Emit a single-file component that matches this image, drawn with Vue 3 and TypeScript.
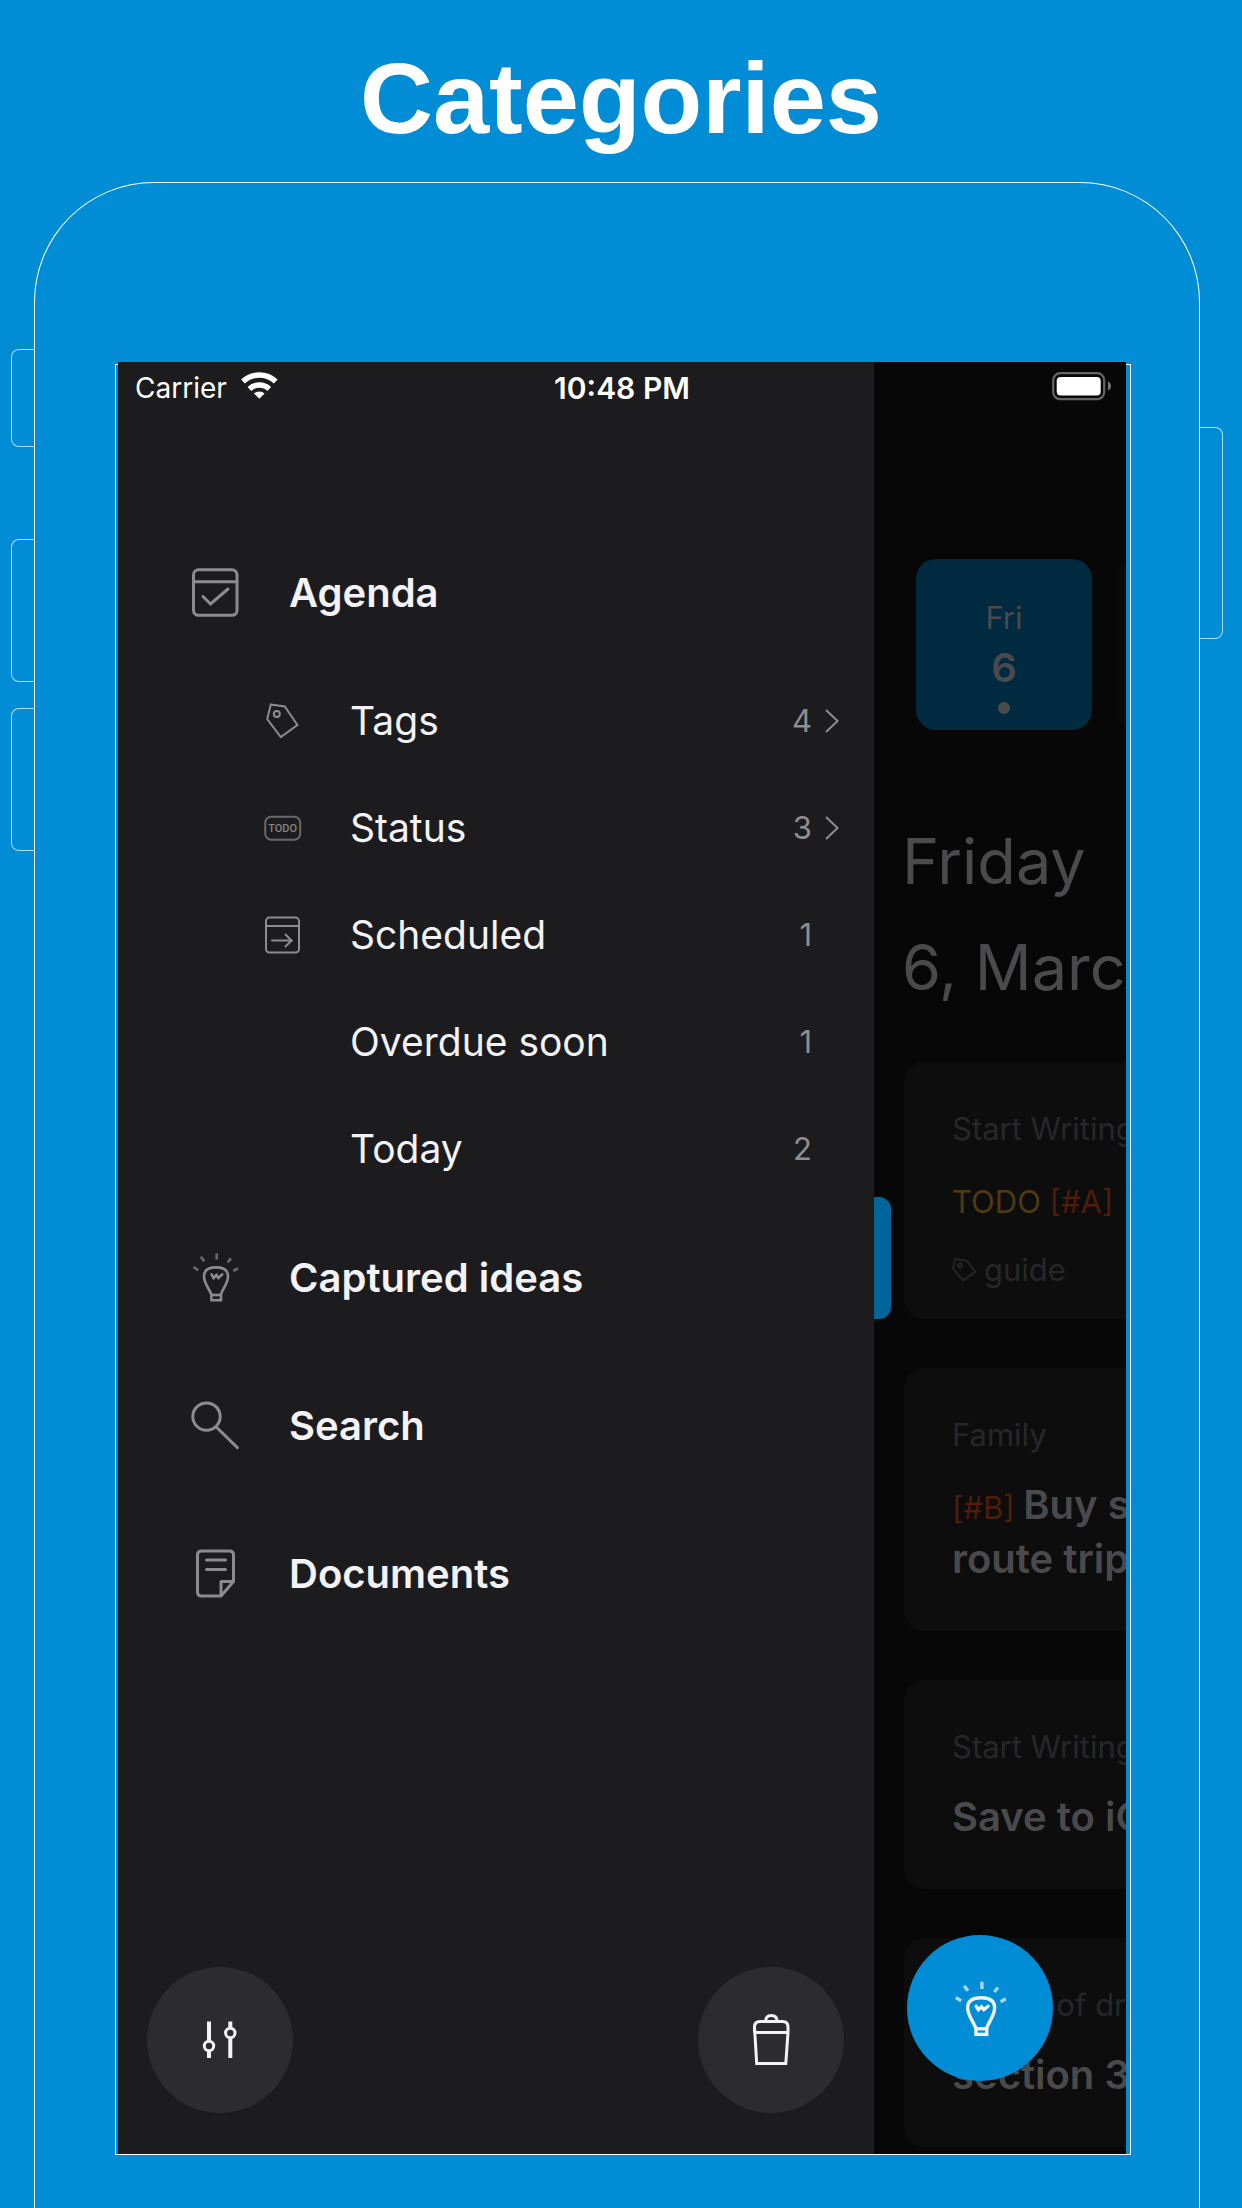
<script setup lang="ts">
interface SubItem {
  label: string
  icon: 'tag' | 'todo' | 'scheduled' | null
  count: number
  expandable: boolean
}

interface MainItem {
  label: string
  icon: 'bulb' | 'search' | 'document'
}

interface Card {
  source: string
  keyword?: string
  priority?: string
  lines: string[]
  tag?: string
}

const agendaItems: SubItem[] = [
  { label: 'Tags', icon: 'tag', count: 4, expandable: true },
  { label: 'Status', icon: 'todo', count: 3, expandable: true },
  { label: 'Scheduled', icon: 'scheduled', count: 1, expandable: false },
  { label: 'Overdue soon', icon: null, count: 1, expandable: false },
  { label: 'Today', icon: null, count: 2, expandable: false },
]

const mainItems: MainItem[] = [
  { label: 'Captured ideas', icon: 'bulb' },
  { label: 'Search', icon: 'search' },
  { label: 'Documents', icon: 'document' },
]

const cards: Card[] = [
  { source: 'Start Writing', keyword: 'TODO', priority: '[#A]', lines: [''], tag: 'guide' },
  { source: 'Family', priority: '[#B]', lines: ['Buy some', 'route trip'] },
  { source: 'Start Writing', lines: ['Save to iCloud'] },
  { source: 'Basics of drawing', lines: ['section 3'] },
]
</script>

<template>
  <div class="page">
    <h1 class="title">Categories</h1>

    <div class="phone">
      <span class="key key-mute"></span>
      <span class="key key-up"></span>
      <span class="key key-down"></span>
      <span class="key key-power"></span>

      <div class="bezel">
        <div class="screen">
          <header class="status">
            <span class="carrier">
              Carrier
              <svg width="37" height="28" viewBox="0 0 37 28" fill="none" stroke="#fff" aria-hidden="true">
                <path d="M2 10.5A24 24 0 0 1 34.7 10.5" stroke-width="5.5" />
                <path d="M8.4 17.9A14.5 14.5 0 0 1 28.2 17.9" stroke-width="5.5" />
                <path d="M13 22.4A8 8 0 0 1 23.6 22.4L18.3 27.8Z" fill="#fff" stroke="none" />
              </svg>
            </span>
            <time class="clock">10:48 PM</time>
            <svg class="battery" width="60" height="30" viewBox="0 0 60 30" aria-hidden="true">
              <rect x="1.2" y="2.2" width="51" height="26" rx="7" fill="none" stroke="#666" stroke-width="2.2" />
              <rect x="4.7" y="5.9" width="44" height="18.6" rx="4" fill="#fff" />
              <path d="M56 10.5Q59 12 59 15T56 19.5Z" fill="#777" />
            </svg>
          </header>

          <aside class="sidebar">
            <nav class="menu">
              <a class="row" href="#agenda">
                <svg class="icon" width="48" height="50" viewBox="0 0 48 50" aria-hidden="true">
                  <rect x="2.5" y="2.8" width="43.5" height="45.5" rx="5" />
                  <path d="M2.5 14.7H46M12 29.5L19.5 37L37 22" stroke-linecap="round" />
                </svg>
                Agenda
              </a>
              <ul class="sub">
                <li v-for="item in agendaItems" :key="item.label">
                  <a class="sub-row" href="#agenda">
                    <svg class="icon small" width="38" height="40" viewBox="0 0 38 40" aria-hidden="true">
                      <template v-if="item.icon === 'tag'">
                        <path d="M6.8 3.4L20.8 5.4L33.4 24L16.8 36L3.2 18Z" />
                        <circle cx="12.8" cy="13" r="3" />
                      </template>
                      <template v-else-if="item.icon === 'todo'">
                        <rect class="faint" x="1.2" y="8.8" width="35" height="23" rx="6" />
                        <text x="18.7" y="24" text-anchor="middle">TODO</text>
                      </template>
                      <template v-else-if="item.icon === 'scheduled'">
                        <rect x="2" y="2.6" width="33" height="35" rx="3.5" />
                        <path d="M2 11H35M8 25.5H28M21.5 19.5L27.6 25.5L21.5 31.5" stroke-linecap="round" />
                      </template>
                    </svg>
                    <span class="sub-label">{{ item.label }}</span>
                    <span class="count">{{ item.count }}</span>
                    <svg class="chevron" width="14" height="24" viewBox="0 0 14 24" aria-hidden="true">
                      <path v-if="item.expandable" d="M1 1L12.6 12L1 23" />
                    </svg>
                  </a>
                </li>
              </ul>
              <a v-for="item in mainItems" :key="item.label" class="row" :href="'#' + item.icon">
                <svg class="icon" width="48" height="50" viewBox="0 0 48 50" aria-hidden="true">
                  <g v-if="item.icon === 'bulb'" stroke-width="2.6">
                    <path class="rays" d="M2.5 15.2L7.3 18.2M9.9 4.7L13.3 9.3M25.7 1.2V7.6M40 6.3L36.7 10.3M47 16.3L42.3 19" />
                    <path d="M20.6 43C18 36.5 13 31 13 24.5C13 18 18 15.4 25 15.4C32 15.4 37 18 37 24.5C37 31 32 36.5 29.6 43" />
                    <rect x="20.4" y="43" width="9.6" height="5.2" />
                    <path d="M20.6 22.4L22.6 26L25.4 23L27.4 26L31.2 22.4" stroke-linecap="round" />
                  </g>
                  <g v-else-if="item.icon === 'search'">
                    <circle cx="15.5" cy="16.6" r="13.7" />
                    <path d="M25.5 27.2L46.4 47.6" stroke-linecap="round" />
                  </g>
                  <g v-else>
                    <path d="M30 48H10.5Q6.500 48 6.5 44V7Q6.5 3 10.5 3H38.5Q42.5 3 42.5 7V33.5L30 48V33.5H42.5" stroke-linejoin="round" />
                    <path d="M15.5 12H34.5M15.5 21.6H34.5" stroke-linecap="round" />
                  </g>
                </svg>
                {{ item.label }}
              </a>
            </nav>
            <footer class="tools">
              <button class="round" type="button" aria-label="Settings">
                <svg width="40" height="40" viewBox="0 0 40 40" fill="none" stroke="#f2f2f7" aria-hidden="true">
                  <path d="M9 1.5V21M9 31V38M30.3 1.5V8M30.3 18V38" stroke-width="4" />
                  <circle cx="9" cy="26" r="4.7" stroke-width="3" />
                  <circle cx="30.3" cy="13" r="4.7" stroke-width="3" />
                </svg>
              </button>
              <button class="round" type="button" aria-label="Trash">
                <svg width="40" height="54" viewBox="0 0 40 54" fill="none" stroke="#f2f2f7" stroke-width="3" aria-hidden="true">
                  <path d="M3.5 19.5V14Q3.5 8.6 9 8.6H31.500Q37 8.6 37 14V19.5L34.8 50.5H5.7L3.5 14M3.5 19.5H37" />
                  <path d="M14.5 8.6Q14.5 2.6 20.3 2.6T26.2 8.6" />
                </svg>
              </button>
            </footer>
          </aside>

          <main class="content">
            <span class="handle"></span>
            <div class="days">
              <div class="day active">
                <span class="weekday">Fri</span>
                <strong class="date">6</strong>
                <span class="dot"></span>
              </div>
              <div class="day"></div>
            </div>
            <h2 class="heading">Friday<br />6, March</h2>
            <div class="cards">
              <article v-for="(card, i) in cards" :key="i" class="card" :class="{ tagged: card.tag }">
                <p class="source">{{ card.source }}</p>
                <p class="headline">
                  <span v-if="card.keyword" class="keyword">{{ card.keyword + ' ' }}</span>
                  <span v-if="card.priority" class="priority">{{ card.priority + ' ' }}</span>
                  <template v-for="(line, n) in card.lines" :key="n"><br v-if="n" />{{ line }}</template>
                </p>
                <p v-if="card.tag" class="tag">
                  <svg width="26" height="26" viewBox="0 0 26 26" fill="none" stroke="currentColor" stroke-width="1.8" aria-hidden="true">
                    <path d="M3 2L14.5 3.5L23.5 14.5L11 23.5L1 11.5Z" />
                    <circle cx="8" cy="8.5" r="2" />
                  </svg>
                  {{ card.tag }}
                </p>
              </article>
            </div>
          </main>

          <button class="round fab" type="button" aria-label="Capture idea">
            <svg width="54" height="57" viewBox="0 0 48 50" fill="none" stroke="#f2f2f7" stroke-width="3" aria-hidden="true">
              <path class="rays" d="M2.5 15.2L7.3 18.2M9.9 4.7L13.3 9.3M25.7 1.2V7.6M40 6.3L36.7 10.3M47 16.3L42.3 19" />
              <path d="M20.6 43C18 36.5 13 31 13 24.5C13 18 18 15.4 25 15.4C32 15.4 37 18 37 24.5C37 31 32 36.5 29.6 43" />
              <rect x="20.4" y="43" width="9.6" height="5" />
              <path d="M20.6 23L22.6 26L25.4 23.4L27.4 26L31.2 23" stroke-linecap="round" />
            </svg>
          </button>
        </div>
      </div>
    </div>
  </div>
</template>

<style>
body {
  margin: 0;
  background: #008dd5;
}
</style>

<style scoped>
.page {
  display: flex;
  flex-direction: column;
  min-height: 100vh;
  overflow: hidden;
  background: #008dd5;
  font-family: Inter, "Liberation Sans", sans-serif;
}

.title {
  margin: 0;
  padding: 38px 0 24px;
  color: #fff;
  font: 700 101px/120px "Liberation Sans", sans-serif;
  text-align: center;
}

.phone {
  position: relative;
  display: flex;
  flex: 1;
  margin: 0 42px 0 34px;
  padding: 181px 68px 53px 80px;
  border: 1px solid #fff;
  border-bottom: 0;
  border-radius: 120px 120px 0 0;
}

.key {
  position: absolute;
  left: -24px;
  box-sizing: border-box;
  width: 23px;
  border: 1px solid rgba(255, 255, 255, 0.7);
  border-right: 0;
  border-radius: 8px 0 0 8px;
}

.key-mute {
  top: 166px;
  height: 98px;
}

.key-up {
  top: 356px;
  height: 143px;
}

.key-down {
  top: 525px;
  height: 143px;
}

.key-power {
  top: 244px;
  right: -24px;
  left: auto;
  height: 212px;
  border-right: 1px solid rgba(255, 255, 255, 0.7);
  border-left: 0;
  border-radius: 0 8px 8px 0;
}

.bezel {
  display: flex;
  flex: 1;
  min-width: 0;
  padding: 0 4px 0 2px;
  border: 1px solid #fff;
}

.screen {
  position: relative;
  display: flex;
  flex: 1;
  min-width: 0;
  margin-top: -3px;
  overflow: hidden;
  background: #070707;
}

.status {
  position: absolute;
  z-index: 2;
  top: 0;
  right: 0;
  left: 0;
  display: grid;
  grid-template-columns: 1fr auto 1fr;
  align-items: start;
  padding: 9px 14px 0;
  color: #fff;
  font-size: 28px;
  line-height: 34px;
}

.carrier {
  display: flex;
  gap: 14px;
  align-items: flex-start;
  padding-left: 3px;
}

.clock {
  font-size: 30px;
  font-weight: 600;
}

.battery {
  justify-self: end;
}

.sidebar {
  display: flex;
  flex: 0 0 75%;
  flex-direction: column;
  justify-content: space-between;
  background: #1c1c1e;
}

.menu {
  padding-top: 156px;
}

.row,
.sub-row {
  display: flex;
  align-items: center;
  color: #f2f2f7;
  text-decoration: none;
}

.row {
  gap: 50px;
  height: 148px;
  padding-left: 73px;
  font-size: 40px;
  font-weight: 600;
}

.sub {
  margin: 0;
  padding: 1px 0;
  list-style: none;
}

.sub-row {
  height: 107px;
  padding: 0 35px 0 146px;
  font-size: 39px;
}

.sub-label {
  flex: 1;
  padding-left: 48px;
}

.count {
  color: #8e8e90;
  font-size: 31px;
}

.icon {
  flex: none;
  fill: none;
  stroke: #8c8c8e;
  stroke-width: 3;
}

.small {
  stroke-width: 2;
}

.small text {
  fill: #858587;
  stroke: none;
  font: 500 11px Roboto, sans-serif;
}

.faint {
  stroke: #69696b;
}

.rays {
  opacity: 0.7;
}

.chevron {
  margin-left: 13px;
  fill: none;
  stroke: #8e8e90;
  stroke-width: 2;
}

.tools {
  display: flex;
  justify-content: space-between;
  padding: 0 30px 41px 29px;
}

.round {
  display: flex;
  align-items: center;
  justify-content: center;
  width: 146px;
  height: 146px;
  padding: 0;
  border: 0;
  border-radius: 50%;
  background: #2c2c2e;
}

.fab {
  position: absolute;
  right: 73px;
  bottom: 73px;
  background: #008dd5;
}

.content {
  position: relative;
  flex: 1;
  min-width: 0;
  padding-top: 197px;
  overflow: hidden;
  color: #4a4a4c;
  white-space: nowrap;
}

.handle {
  position: absolute;
  top: 835px;
  left: 0;
  width: 17px;
  height: 122px;
  border-radius: 0 12px 12px 0;
  background: #006699;
}

.days {
  display: flex;
  gap: 25px;
  padding-left: 42px;
}

.day {
  display: flex;
  flex: none;
  flex-direction: column;
  align-items: center;
  box-sizing: border-box;
  width: 176px;
  height: 171px;
  padding-top: 41px;
  border-radius: 20px;
  background: #0b0b0b;
}

.active {
  background: #002a40;
}

.weekday {
  font-size: 31px;
  line-height: 36px;
}

.date {
  font-size: 40px;
  font-weight: 600;
  line-height: 64px;
}

.dot {
  width: 12px;
  height: 12px;
  margin-top: 2px;
  border-radius: 50%;
  background: #4a4a4c;
}

.heading {
  margin: 78px 0 42px;
  padding-left: 28px;
  font-size: 63px;
  font-weight: 400;
  line-height: 106px;
}

.cards {
  display: flex;
  flex-direction: column;
  gap: 49px;
  margin: 0 -48px 0 30px;
}

.card {
  padding: 49px 0 45px 48px;
  border-radius: 20px;
  background: #0d0d0d;
}

.tagged {
  padding-bottom: 31px;
}

.card p {
  margin: 0;
}

.source,
.tag {
  color: #272729;
  font-size: 31px;
  line-height: 36px;
}

.card .headline {
  margin-top: 25px;
  font-size: 40px;
  font-weight: 600;
  line-height: 54px;
}

.keyword,
.priority {
  color: #4d3a12;
  font-size: 31px;
  font-weight: 400;
  line-height: 36px;
}

.priority {
  color: #4f1d0a;
}

.card .tag {
  display: flex;
  gap: 6px;
  align-items: center;
  margin-top: 26px;
}
</style>
